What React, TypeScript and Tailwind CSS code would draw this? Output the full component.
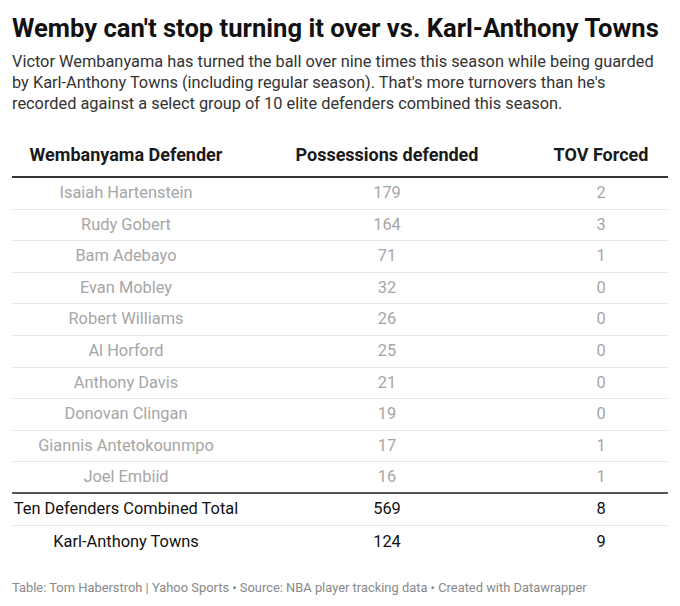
const rows: [string, number, number][] = [
  ['Isaiah Hartenstein', 179, 2],
  ['Rudy Gobert', 164, 3],
  ['Bam Adebayo', 71, 1],
  ['Evan Mobley', 32, 0],
  ['Robert Williams', 26, 0],
  ['Al Horford', 25, 0],
  ['Anthony Davis', 21, 0],
  ['Donovan Clingan', 19, 0],
  ['Giannis Antetokounmpo', 17, 1],
  ['Joel Embiid', 16, 1],
]

export default function App() {
  return (
    <div className="w-[680px] h-[606px] bg-white px-3 pt-[11px] font-['Roboto',sans-serif]">
      <h1 className="text-[25.6px] leading-[34px] font-bold text-[#111]">
        Wemby can't stop turning it over vs. Karl-Anthony Towns
      </h1>
      <p className="mt-[6px] max-w-[650px] text-[16.35px] leading-[21px] text-[#333]">
        Victor Wembanyama has turned the ball over nine times this season while being guarded by Karl-Anthony Towns
        (including regular season). That's more turnovers than he's recorded against a select group of 10 elite
        defenders combined this season.
      </p>

      <div className="mt-[22px] w-[656px]">
        <div className="flex h-[42px] items-end pb-[8px] border-b-2 border-[#333] text-[18px] font-bold text-[#1a1a1a]">
          <div className="w-[228px] text-center">Wembanyama Defender</div>
          <div className="w-[294px] text-center">Possessions defended</div>
          <div className="w-[134px] text-center">TOV Forced</div>
        </div>
        {rows.map(([name, poss, tov], i) => (
          <div
            key={name}
            className={`flex h-[31.6px] items-center text-[16.4px] text-[#a6a6a6] ${
              i === rows.length - 1 ? 'border-b-2 border-[#555]' : 'border-b border-[#e6e6e6]'
            }`}
          >
            <div className="w-[228px] text-center">{name}</div>
            <div className="w-[294px] text-center">{poss}</div>
            <div className="w-[134px] text-center">{tov}</div>
          </div>
        ))}
        <div className="flex h-[32px] items-center border-b border-[#e6e6e6] text-[16.4px] text-[#111]">
          <div className="w-[228px] text-center whitespace-nowrap">Ten Defenders Combined Total</div>
          <div className="w-[294px] text-center">569</div>
          <div className="w-[134px] text-center">8</div>
        </div>
        <div className="flex h-[33px] items-center text-[16.4px] text-[#111]">
          <div className="w-[228px] text-center">Karl-Anthony Towns</div>
          <div className="w-[294px] text-center">124</div>
          <div className="w-[134px] text-center">9</div>
        </div>
      </div>

      <p className="mt-[19px] text-[12.9px] text-[#888]">
        Table: Tom Haberstroh | Yahoo Sports • Source: NBA player tracking data • Created with Datawrapper
      </p>
    </div>
  )
}
